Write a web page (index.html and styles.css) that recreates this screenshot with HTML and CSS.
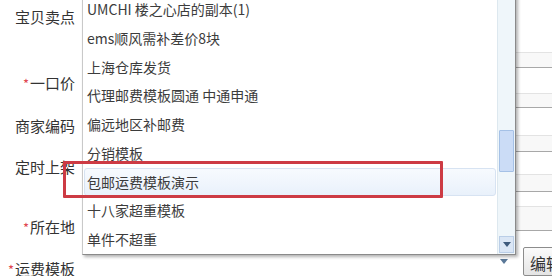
FILE: index.html
```html
<!DOCTYPE html>
<html lang="zh-CN">
<head>
<meta charset="utf-8">
<title>运费模板</title>
<link rel="stylesheet" href="styles.css">
</head>
<body>
<div class="page">
  <div class="form">
    <div class="labels">
      <div class="lbl l1">宝贝卖点</div>
      <div class="lbl l2"><span class="req">*</span>一口价</div>
      <div class="lbl l3">商家编码</div>
      <div class="lbl l4">定时上架</div>
      <div class="divider"></div>
      <div class="lbl l5"><span class="req">*</span>所在地</div>
      <div class="lbl l6"><span class="req">*</span>运费模板</div>
    </div>
    <div class="fields">
      <div class="field f1"></div>
      <div class="field f2"></div>
      <div class="field f3"></div>
      <div class="field f4"></div>
      <div class="field f5"></div>
      <div class="bottom-row">
        <div class="select"><span class="sel-arrow"></span></div>
        <button class="btn">编辑</button>
      </div>
    </div>
  </div>

  <div class="dropdown">
    <ul class="options">
      <li class="opt">UMCHI 楼之心店的副本(1)</li>
      <li class="opt">ems顺风需补差价8块</li>
      <li class="opt">上海仓库发货</li>
      <li class="opt">代理邮费模板圆通 中通申通</li>
      <li class="opt">偏远地区补邮费</li>
      <li class="opt">分销模板</li>
      <li class="opt hover">包邮运费模板演示</li>
      <li class="opt">十八家超重模板</li>
      <li class="opt">单件不超重</li>
    </ul>
    <div class="scrollbar">
      <div class="thumb"></div>
      <div class="down"><span class="down-arrow"></span></div>
    </div>
  </div>

  <div class="callout"></div>
</div>
</body>
</html>
```

FILE: styles.css
```css
* { box-sizing: border-box; }
html, body { margin: 0; padding: 0; }
body {
  background: #ffffff;
  font-family: "Noto Sans CJK SC", "Noto Sans", sans-serif;
  color: #333;
}
.page {
  position: relative;
  width: 552px;
  height: 276px;
  overflow: hidden;
  background: #fff;
}
.form {
  display: flex;
  height: 100%;
}
.labels {
  width: 82px;
  flex: none;
  display: flex;
  flex-direction: column;
}
.lbl {
  height: 34px;
  line-height: 34px;
  font-size: 15px;
  text-align: right;
  padding-right: 7px;
  color: #333;
  white-space: nowrap;
}
.req { color: #e0464f; font-size: 13px; margin-right: 1px; }
.l1 { margin-top: 0; }
.l2 { margin-top: 32px; }
.l3 { margin-top: 9px; }
.l4 { margin-top: 7px; }
.divider {
  margin: 13px 0 13px 10px;
  height: 1px;
  background: #9c9c9c;
  box-shadow: 0 1px 0 #e6e6e6;
}
.l6 { margin-top: 8px; }

.fields {
  flex: 1;
  display: flex;
  flex-direction: column;
}
.field {
  border-top: 1px solid #e3e3e3;
  border-bottom: 1px solid #a8a8a8;
  background: #f8f8f8;
}
.f1 { margin-top: 52px; height: 17px; }
.f2 { margin-top: 25px; height: 17px; }
.f3 { margin-top: 27px; height: 18px; }
.f4 { margin-top: 22px; height: 20px; }
.f5 { margin-top: 14px; height: 27px; }
.bottom-row {
  margin-top: 16px;
  display: flex;
  align-items: flex-start;
  gap: 4px;
}
.select {
  width: 437px;
  height: 22px;
  background: #fff;
  display: flex;
  align-items: center;
  justify-content: flex-end;
  padding-right: 11px;
  padding-top: 6px;
}
.sel-arrow {
  width: 0; height: 0;
  border-left: 4px solid transparent;
  border-right: 4px solid transparent;
  border-top: 5px solid #5a7898;
}
.btn {
  font-family: "Noto Sans CJK SC", sans-serif;
  font-size: 16px;
  line-height: 20px;
  padding: 5px 6px 2px 6px;
  color: #333;
  border: 1px solid #8c8c8c;
  border-radius: 2px;
  background: linear-gradient(#fbfbfb, #e4e4e4);
  white-space: nowrap;
}

/* dropdown overlay */
.dropdown {
  position: absolute;
  left: 82px;
  top: -5px;
  width: 434px;
  display: flex;
  background: #fff;
  border-left: 1px solid #c9c9c9;
  border-right: 1px solid #8a8a8a;
  border-bottom: 1px solid #8a8a8a;
  box-shadow: 2px 2px 3px rgba(0, 0, 0, 0.3);
}
.options {
  list-style: none;
  margin: 0;
  padding: 0;
  flex: 1;
}
.opt {
  height: 28.75px;
  line-height: 28.75px;
  font-size: 14px;
  padding-left: 4px;
  color: #3c3c3c;
  white-space: nowrap;
  position: relative;
}
.opt.hover {
  background: linear-gradient(#f7fafe, #e9f1fb);
  border: 1px solid #d7e3f2;
  border-radius: 3px;
  margin: 0 1px 0 1px;
  line-height: 26.75px;
  padding-left: 2px;
}
.scrollbar {
  width: 18px;
  flex: none;
  display: flex;
  flex-direction: column;
  background: #eff6fa;
  border-left: 1px solid #dde8ef;
}
.thumb {
  margin: 135px 1px 0 1px;
  height: 42px;
  background: #cbdcf6;
  border: 1px solid #a5c1e6;
  border-radius: 1px;
}
.down {
  margin: auto 1px 1px 1px;
  height: 17px;
  background: #dae6f5;
  border: 1px solid #bacee7;
  display: flex;
  align-items: center;
  justify-content: center;
}
.down-arrow {
  width: 0; height: 0;
  border-left: 4px solid transparent;
  border-right: 4px solid transparent;
  border-top: 5px solid #3d5a7c;
}

/* red annotation rectangle */
.callout {
  position: absolute;
  left: 63px;
  top: 161px;
  width: 380px;
  height: 37px;
  border: 3px solid #cd3b44;
  border-radius: 1px;
}
```
